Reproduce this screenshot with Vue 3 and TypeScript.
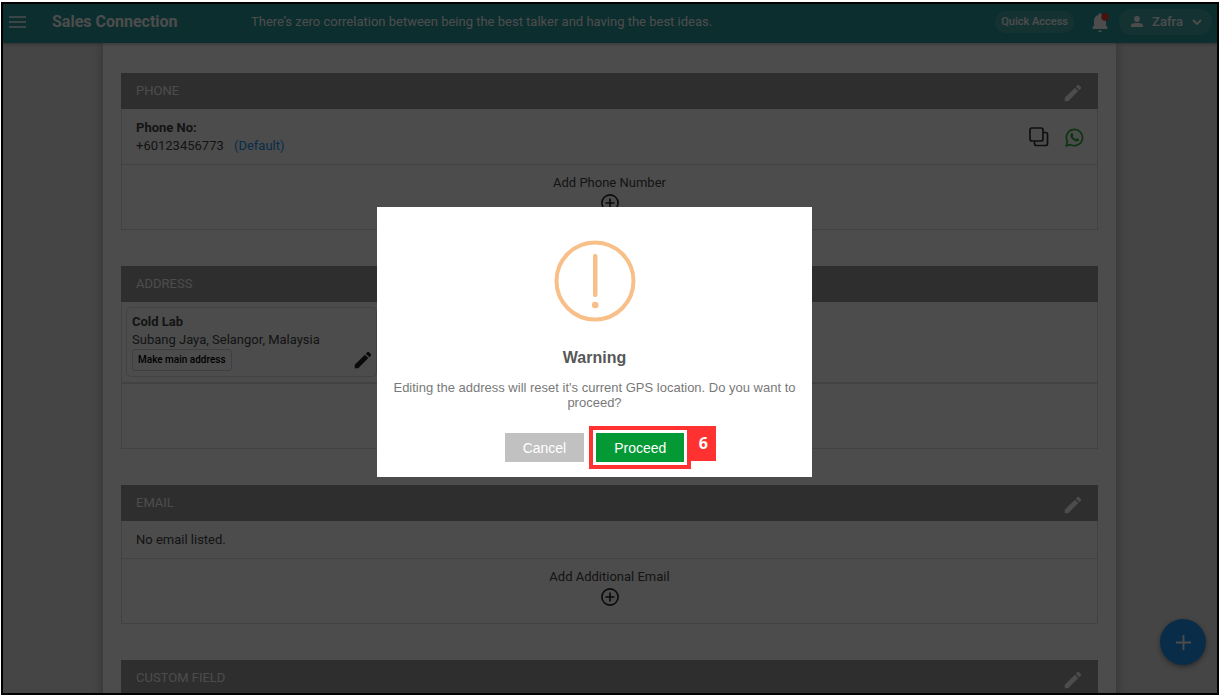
<script setup lang="ts">
import { ref } from 'vue'

const dialogOpen = ref(true)
const quote = 'There’s zero correlation between being the best talker and having the best ideas.'
const pencil =
  'M3 17.25V21h3.75L17.81 9.94l-3.75-3.75L3 17.25zM20.71 7.04a1 1 0 0 0 0-1.41l-2.34-2.34a1 1 0 0 0-1.41 0l-1.83 1.83 3.75 3.75 1.83-1.83z'
</script>

<template>
  <div class="screen">
    <div class="window">
      <header class="topbar">
        <button class="icon-btn menu" type="button" aria-label="Menu">
          <svg width="17" height="12" viewBox="0 0 17 12"><path d="M0 1h17M0 6h17M0 11h17" stroke="currentColor" stroke-width="1.6" /></svg>
        </button>
        <h1 class="brand">Sales Connection</h1>
        <p class="quote">{{ quote }}</p>
        <button class="pill quick" type="button">Quick Access</button>
        <button class="icon-btn bell" type="button" aria-label="Notifications">
          <svg width="18" height="20" viewBox="0 0 18 20">
            <path d="M8 19.2a2 2 0 0 0 2-1.6H6a2 2 0 0 0 2 1.6zM14 12V7.600c0-2.700-1.500-4.900-4.300-5.500V1.800a1.600 1.600 0 0 0-3.300 0v.3C3.600 2.700 2 4.900 2 7.600V12L.5 14.800v1.200h15v-1.200z" fill="#fff" />
            <circle cx="13" cy="4" r="3.700" fill="#f33b2f" />
          </svg>
        </button>
        <button class="pill user" type="button">
          <svg width="12" height="12" viewBox="0 0 12 12"><circle cx="6" cy="3" r="2.900" fill="#fff" /><path d="M0 11V9.500C0 7.600 3.500 7 6 7s6 .6 6 2.500V11z" fill="#fff" /></svg>
          <span>Zafra</span>
          <svg width="10" height="6" viewBox="0 0 10 6"><path d="M1 1l4 4 4-4" fill="none" stroke="#fff" stroke-width="1.800" /></svg>
        </button>
      </header>

      <main class="sheet">
        <section class="panel">
          <div class="panel-head">
            <h2>PHONE</h2>
            <button class="icon-btn" type="button" aria-label="Edit phone"><svg width="22" height="22" viewBox="0 0 24 24"><path :d="pencil" fill="currentColor" /></svg></button>
          </div>
          <div class="row phone">
            <div class="lines">
              <strong>Phone No:</strong>
              <p>+60123456773 <a href="#default">(Default)</a></p>
            </div>
            <button class="icon-btn" type="button" aria-label="Copy number">
              <svg width="20" height="20" viewBox="0 0 20 20" fill="none" stroke="#333" stroke-width="1.700"><rect x="1" y="1" width="13" height="13" rx="2" /><path d="M14 5.500h2.500a2 2 0 0 1 2 2v9a2 2 0 0 1-2 2h-9a2 2 0 0 1-2-2V14" /></svg>
            </button>
            <button class="icon-btn" type="button" aria-label="Open WhatsApp">
              <svg width="19" height="19" viewBox="0 0 20 20"><path d="M1.200 18.800l1.300-4.600A8.500 8.500 0 1 1 5.800 17.500z" fill="none" stroke="#2faa35" stroke-width="1.800" stroke-linejoin="round" /><path d="M6.700 5.400c.4-.4 1-.4 1.200 0l.9 1.900c.1.400-.7 1.200-.7 1.500.6 1.300 1.800 2.400 3.200 3 .4 0 1-1.100 1.400-1l1.900.9c.4.300.2 1.200-.3 1.700-.8.800-2 1-3.100.6-2.500-.8-4.400-2.500-5.300-4.800-.5-1.400-.2-2.900.8-3.800z" fill="#2faa35" /></svg>
            </button>
          </div>
          <button class="add" type="button">
            <span>Add Phone Number</span>
            <svg width="18" height="18" viewBox="0 0 18 18" fill="none" stroke="#222" stroke-width="1.600"><circle cx="9" cy="9" r="8.100" /><path d="M9 4.500v9M4.500 9h9" /></svg>
          </button>
        </section>

        <section class="panel">
          <div class="panel-head"><h2>ADDRESS</h2></div>
          <div class="row cards">
            <article class="card">
              <div class="lines">
                <strong>Cold Lab</strong>
                <p>Subang Jaya, Selangor, Malaysia</p>
                <button class="main-btn" type="button">Make main address</button>
              </div>
              <button class="icon-btn dark" type="button" aria-label="Edit address"><svg width="22" height="22" viewBox="0 0 24 24"><path :d="pencil" fill="currentColor" /></svg></button>
            </article>
          </div>
          <button class="add" type="button" aria-label="Add address"></button>
        </section>

        <section class="panel">
          <div class="panel-head">
            <h2>EMAIL</h2>
            <button class="icon-btn" type="button" aria-label="Edit email"><svg width="22" height="22" viewBox="0 0 24 24"><path :d="pencil" fill="currentColor" /></svg></button>
          </div>
          <div class="row"><p>No email listed.</p></div>
          <button class="add" type="button">
            <span>Add Additional Email</span>
            <svg width="18" height="18" viewBox="0 0 18 18" fill="none" stroke="#222" stroke-width="1.600"><circle cx="9" cy="9" r="8.100" /><path d="M9 4.500v9M4.500 9h9" /></svg>
          </button>
        </section>

        <section class="panel">
          <div class="panel-head">
            <h2>CUSTOM FIELD</h2>
            <button class="icon-btn" type="button" aria-label="Edit custom field"><svg width="22" height="22" viewBox="0 0 24 24"><path :d="pencil" fill="currentColor" /></svg></button>
          </div>
        </section>
      </main>

      <button class="fab" type="button" aria-label="Add">
        <svg width="15" height="15" viewBox="0 0 15 15"><path d="M7.500 0v15M0 7.500h15" stroke="#fff" stroke-width="1.800" /></svg>
      </button>

      <div v-if="dialogOpen" class="overlay">
        <div class="dialog" role="alertdialog" aria-labelledby="dialog-title" aria-describedby="dialog-text">
          <svg class="warn" width="82" height="82" viewBox="0 0 82 82">
            <circle cx="41" cy="41" r="38.500" fill="none" stroke="#f8bf88" stroke-width="4" />
            <rect x="39" y="14" width="4.500" height="43" rx="2" fill="#f8bf88" />
            <circle cx="41.200" cy="65" r="3.300" fill="#f8bf88" />
          </svg>
          <h2 id="dialog-title">Warning</h2>
          <p id="dialog-text">Editing the address will reset it's current GPS location. Do you want to proceed?</p>
          <div class="actions">
            <button class="btn cancel" type="button" @click="dialogOpen = false">Cancel</button>
            <div class="marked">
              <button class="btn proceed" type="button" @click="dialogOpen = false">Proceed</button>
              <span class="ring"></span>
              <span class="step">6</span>
            </div>
          </div>
        </div>
      </div>
    </div>
  </div>
</template>

<style>
body { background: #fff; }
</style>

<style scoped>
.screen, .screen * { box-sizing: border-box; }
.screen { height: 100vh; padding: 2px 1px; font-family: Roboto, "Liberation Sans", sans-serif; font-size: 13px; line-height: 18px; color: #444; }
.window { position: relative; height: 100%; border: 2px solid #000; overflow: hidden; background: #e6e6e6; display: flex; flex-direction: column; }
h1, h2, p { margin: 0; }
button { font: inherit; color: inherit; border: 0; padding: 0; background: none; cursor: pointer; }
svg { display: block; }
.icon-btn { display: flex; flex: none; }

.topbar { flex: none; display: flex; align-items: center; height: 39px; padding: 0 5px 4px 6px; background: #289a9e; color: #fff; box-shadow: 0 1px 3px rgba(0, 0, 0, 0.3); position: relative; }
.brand { margin-left: 26px; width: 199px; font-size: 16px; font-weight: 700; }
.quote { flex: 1; }
.pill { border-radius: 16px; background: rgba(255, 255, 255, 0.15); color: #fff; }
.quick { height: 22px; padding: 0 6px; font-size: 11px; font-weight: 500; }
.bell { margin: 3px 9px 0 18px; }
.user { display: flex; align-items: center; justify-content: space-between; width: 93px; height: 26px; padding: 0 10px 0 12px; font-size: 13px; font-weight: 500; }

.sheet { flex: none; margin: 0 101px 0 100px; padding: 30px 18px; background: #fff; box-shadow: 0 0 10px rgba(0, 0, 0, 0.3); display: flex; flex-direction: column; gap: 36px; }
.panel { border: 1px solid #dcdcdc; border-top: 0; }
.panel-head { display: flex; align-items: center; justify-content: space-between; height: 36px; margin: 0 -1px; padding: 0 14px 0 15px; background: #999; color: #fff; }
.panel-head .icon-btn { padding-top: 4px; }
.panel-head h2 { font-size: 13px; font-weight: 400; }
.row { display: flex; align-items: center; padding: 10px 14px 9px; border-bottom: 1px solid #dcdcdc; }
.phone { gap: 16px; padding-right: 13px; }
.lines { flex: 1; }
.lines strong { display: block; font-weight: 700; }
a { margin-left: 7px; color: #2196f3; text-decoration: none; }
.add { display: flex; flex-direction: column; align-items: center; gap: 2px; width: 100%; height: 64px; padding-top: 9px; }
.cards { padding: 5px 4px; border-bottom-width: 2px; }
.card { display: flex; align-items: flex-end; width: 26%; padding: 5px 2px 5px 5px; border: 1px solid #dcdcdc; border-radius: 5px; }
.main-btn { display: block; height: 22px; padding: 0 5px; border: 1px solid #d0d3dc; border-radius: 3px; font-size: 10px; line-height: 18px; font-weight: 500; color: #000; }
.dark { color: #222; }

.fab { position: absolute; right: 11px; bottom: 28px; width: 46px; height: 46px; border-radius: 50%; background: #2196f3; display: flex; align-items: center; justify-content: center; box-shadow: 0 2px 5px rgba(0, 0, 0, 0.4); }

.overlay { position: absolute; inset: 0; display: flex; align-items: center; justify-content: center; padding: 0 31px 13px 0; background: rgba(0, 0, 0, 0.7); }
.dialog { width: 435px; padding: 33px 16px 15px; background: #fff; text-align: center; font-family: "Liberation Sans", Arial, sans-serif; }
.warn { margin: 0 auto 25px; }
.dialog h2 { margin-bottom: 11px; font-size: 16px; line-height: 22px; font-weight: 700; color: #575757; }
.dialog p { line-height: 15px; color: #797979; }
.actions { display: flex; justify-content: center; gap: 12px; margin-top: 23px; }
.btn { display: block; height: 29px; padding: 0 18px; font-size: 14px; color: #fff; }
.cancel { background: #c1c1c1; }
.proceed { background: #039a35; }
.marked { position: relative; }
.ring { position: absolute; inset: -7px; border: 4px solid #ff3131; pointer-events: none; }
.step { position: absolute; left: 100%; top: -7px; margin-left: 6px; width: 26px; height: 35px; background: #ff3131; color: #fff; font: 700 16px/35px "Open Sans", sans-serif; }
</style>
